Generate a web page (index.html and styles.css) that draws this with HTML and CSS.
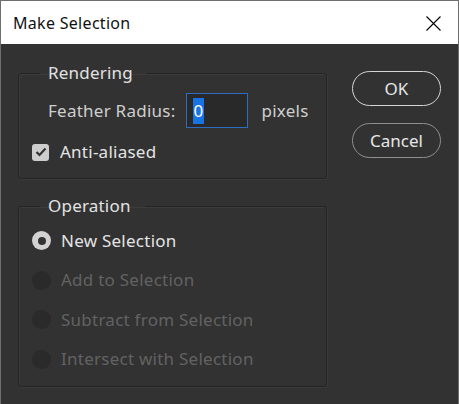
FILE: index.html
```html
<!DOCTYPE html>
<html>
<head>
<meta charset="utf-8">
<link rel="stylesheet" href="styles.css">
</head>
<body>
<div class="window">
  <div class="titlebar">
    <span class="title">Make Selection</span>
    <svg class="close" width="15" height="15" viewBox="0 0 15 15"><path d="M0.5 0.5L14.5 14.5M14.5 0.5L0.5 14.5" stroke="#000" stroke-width="1.1" fill="none"/></svg>
  </div>
  <div class="content">
    <div class="left">
      <fieldset class="group rendering">
        <legend>Rendering</legend>
        <div class="feather-row">
          <span class="label">Feather Radius:</span>
          <div class="input"><span class="sel">0</span></div>
          <span class="label">pixels</span>
        </div>
        <div class="check-row">
          <span class="checkbox"><svg width="12" height="10" viewBox="0 0 12 10"><path d="M1.5 5L4.5 8L10.5 1.5" stroke="#333" stroke-width="2.2" fill="none"/></svg></span>
          <span class="label bright">Anti-aliased</span>
        </div>
      </fieldset>
      <fieldset class="group operation">
        <legend>Operation</legend>
        <div class="radio-row"><span class="radio on"></span><span class="label bright">New Selection</span></div>
        <div class="radio-row"><span class="radio"></span><span class="label dim">Add to Selection</span></div>
        <div class="radio-row"><span class="radio"></span><span class="label dim">Subtract from Selection</span></div>
        <div class="radio-row"><span class="radio"></span><span class="label dim">Intersect with Selection</span></div>
      </fieldset>
    </div>
    <div class="right">
      <button class="btn default">OK</button>
      <button class="btn">Cancel</button>
    </div>
  </div>
</div>
</body>
</html>
```
FILE: styles.css
```css
* { box-sizing: border-box; }
html, body { margin: 0; padding: 0; }
body {
  background: #323232;
  font-family: "Noto Sans", "Open Sans", sans-serif;
  width: 459px;
  height: 404px;
  overflow: hidden;
}
.window {
  width: 459px;
  height: 404px;
  border: 1px solid #6e6e6e;
  border-bottom: none;
  background: #323232;
  display: flex;
  flex-direction: column;
}
.titlebar {
  height: 43px;
  background: #fff;
  display: flex;
  align-items: center;
  justify-content: space-between;
  padding: 0 17px 0 12px;
  flex: none;
}
.title {
  font-size: 16px;
  color: #111;
  font-family: "Noto Sans", sans-serif;
  letter-spacing: 0.3px;
}
.close { display: block; margin-top: 1px; }
.content {
  display: flex;
  padding: 0 17px 0 17px;
  gap: 25px;
}
.left {
  width: 310px;
  display: flex;
  flex-direction: column;
  gap: 17px;
  padding-top: 19px;
}
.group {
  margin: 0;
  border: 1px solid #242424;
  border-radius: 3px;
  box-shadow: inset 1px 1px 0 #3c3c3c, 1px 1px 0 #3a3a3a;
  padding: 0 0 0 13px;
  min-width: 0;
}
.group legend {
  margin-left: 8px;
  padding: 0 14px 0 8px;
  font-size: 17px;
  line-height: 20px;
  letter-spacing: 0.2px;
  color: #e2e2e2;
}
.label {
  font-size: 17px;
  letter-spacing: 0.25px;
  color: #cfcfcf;
  line-height: 20px;
  white-space: nowrap;
}
.label.bright { color: #e4e4e4; }
.label.dim { color: #626262; }
.rendering { padding-top: 10px; padding-bottom: 16px; }
.feather-row {
  display: flex;
  align-items: center;
  margin-left: 16px;
  height: 35px;
}
.input {
  width: 62px;
  height: 35px;
  margin: 0 14px 0 10px;
  border: 1px solid #2e6cc0;
  background: #292929;
  display: flex;
  align-items: center;
  padding-left: 6px;
}
.sel {
  background: #1a73e2;
  color: #fff;
  font-size: 17px;
  line-height: 26px;
  padding: 0 1px;
}
.check-row {
  display: flex;
  align-items: center;
  gap: 11px;
  margin-top: 14px;
  height: 20px;
}
.checkbox {
  width: 17px;
  height: 17px;
  border-radius: 3px;
  background: #cdcdcd;
  display: flex;
  align-items: center;
  justify-content: center;
}
.operation { padding-top: 5px; padding-bottom: 7px; }
.radio-row {
  display: flex;
  align-items: center;
  gap: 10px;
  height: 39.5px;
}
.radio {
  width: 19px;
  height: 19px;
  border-radius: 50%;
  background: #2a2a2a;
  flex: none;
}
.radio.on {
  background: #d2d2d2;
  display: flex;
  align-items: center;
  justify-content: center;
}
.radio.on::after {
  content: "";
  width: 8px;
  height: 8px;
  border-radius: 50%;
  background: #333;
}
.right {
  display: flex;
  flex-direction: column;
  gap: 17px;
  padding-top: 27px;
}
.btn {
  width: 89px;
  height: 35px;
  border-radius: 18px;
  background: transparent;
  border: 1.5px solid #8f8f8f;
  color: #e6e6e6;
  font-family: "Noto Sans", sans-serif;
  font-size: 17px;
  padding: 0;
}
.btn.default { border-color: #d6d6d6; }
```
